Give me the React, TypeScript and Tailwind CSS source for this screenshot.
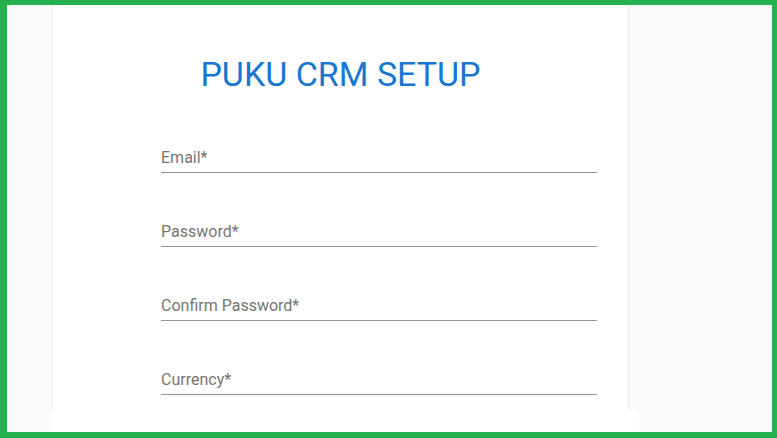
export default function App() {
  const fields = ['Email*', 'Password*', 'Confirm Password*', 'Currency*']

  return (
    <div
      className="w-[777px] h-[438px] border-solid border-[#22b14c] border-t-[5px] border-l-[7px] border-r-[5px] border-b-[6px] bg-[#fafafa] flex flex-col overflow-hidden"
      style={{ fontFamily: 'Roboto, "Liberation Sans", sans-serif' }}
    >
      <div className="flex-1 flex min-h-0">
        <div className="ml-[45px] w-[577px] bg-white border-l border-r border-[#ececec]">
          <h1 className="pt-[49px] text-center text-[34px] leading-[40px] text-[#1976d2] font-normal">
            PUKU CRM SETUP
          </h1>

          {/* Form */}
          <div className="ml-[108px] w-[436px] mt-[5px]">
            {fields.map((label) => (
              <div key={label} className="h-[74px] flex items-end border-b border-[#949494]">
                <span className="pb-[4px] text-[16px] leading-[20px] text-[#757575]">{label}</span>
              </div>
            ))}
          </div>
        </div>
      </div>
      <div className="ml-[45px] w-[587px] h-[22px] bg-white" />
    </div>
  )
}
